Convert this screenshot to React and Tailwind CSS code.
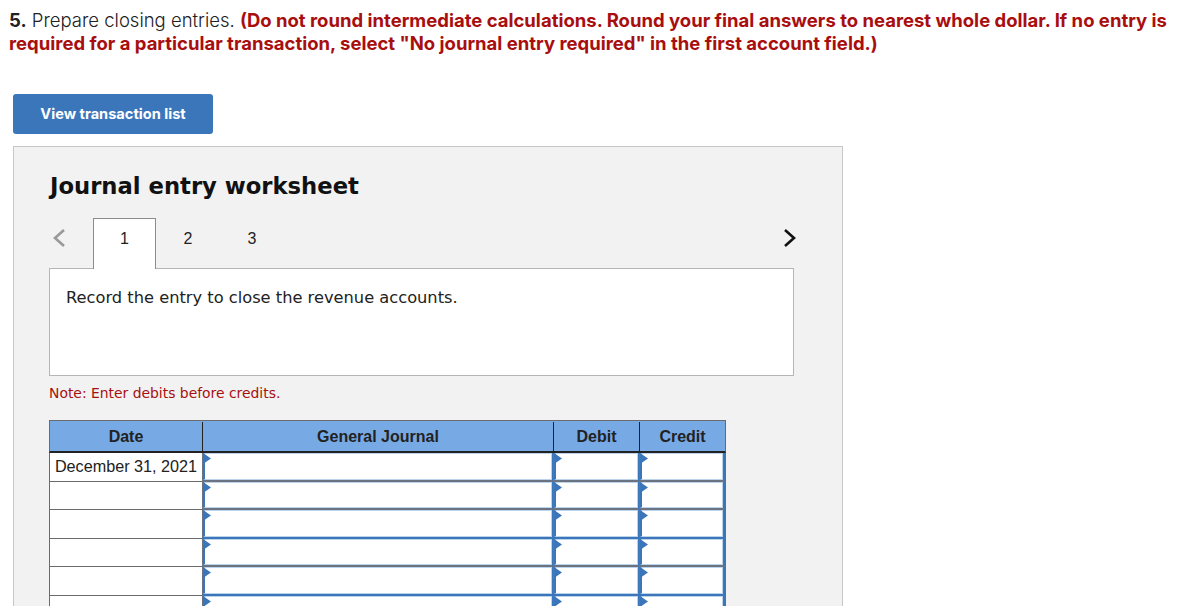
const rows = [
  { date: "December 31, 2021", line: "border-b-[#6b7280]" },
  { date: "", line: "border-b-[#6b7280]" },
  { date: "", line: "border-b-[#3b76bb]" },
  { date: "", line: "border-b-[#6b7280]" },
  { date: "", line: "border-b-[#3b76bb]" },
  { date: "", line: "border-b-[#3b76bb]" },
];

// editable cell with the little blue flag in the corner
function EntryCell({ width, line }) {
  return (
    <div className={`relative h-full shrink-0 border-b-2 border-l border-r border-l-[#6b7280] border-r-[#3b76bb] bg-white last:border-r-[3px] ${line} ${width}`}>
      <div className="h-full border border-l-2 border-[#bcd3ec] border-l-[#3b76bb]" />
      <svg className="absolute left-0 top-0" width="9" height="11" viewBox="0 0 9 11">
        <path d="M0 0L8 5.5L0 11Z" fill="#3b76bb" />
      </svg>
    </div>
  );
}

export default function App() {
  return (
    <div className="h-[606px] overflow-hidden bg-white">
      <div className="pl-[9px] pt-[9px] font-['Inter',sans-serif] text-[18.5px] leading-[23px] text-[#222]">
        <p className="whitespace-nowrap">
          <b>5.</b> <span className="font-light">Prepare closing entries.</span>{" "}
          <b className="text-[#a80e0e]">
            (Do not round intermediate calculations. Round your final answers to nearest whole dollar. If no entry is
          </b>
        </p>
        <p className="whitespace-nowrap font-bold text-[#a80e0e]">
          required for a particular transaction, select "No journal entry required" in the first account field.)
        </p>
      </div>

      <button className="ml-[13px] mt-[39px] block h-[40px] w-[200px] rounded-[3px] bg-[#3b76bb] pt-[1px] font-['Inter',sans-serif] text-[14.6px] font-bold text-white">
        View transaction list
      </button>

      <div className="ml-[13px] mt-[12px] h-[500px] w-[830px] border border-[#c6c6c6] bg-[#f2f2f2] pl-[35px] pr-[48px] pt-[24px]">
        <h2 className="pl-[1px] font-['DejaVu_Sans',sans-serif] text-[22.7px] font-bold leading-[30px] text-[#111]">
          Journal entry worksheet
        </h2>

        <div className="relative mt-[17px] flex h-[51px] items-center font-['Liberation_Sans',sans-serif] text-[16px] text-[#222]">
          <svg className="ml-[3px] mb-[12px] w-[14px]" height="20" viewBox="0 0 14 20" fill="none" stroke="#999" strokeWidth="2.6">
            <path d="M12 2L3 10L12 18" />
          </svg>
          <div className="relative z-10 ml-[27px] flex h-[51px] w-[63px] items-center justify-center border border-b-0 border-[#8c8c8c] bg-white pb-[10px]">
            1
          </div>
          <div className="flex w-[64px] justify-center pb-[10px]">2</div>
          <div className="flex w-[64px] justify-center pb-[10px]">3</div>
          <svg className="ml-auto mb-[12px] mr-[-2px] w-[14px]" height="20" viewBox="0 0 14 20" fill="none" stroke="#111" strokeWidth="2.6">
            <path d="M3 2L12 10L3 18" />
          </svg>
        </div>

        <div className="mt-[-1px] h-[108px] w-[745px] border border-[#b5b5b5] bg-white px-[16px] pt-[18px] font-['DejaVu_Sans',sans-serif] text-[16.25px] leading-[22px] text-[#222]">
          Record the entry to close the revenue accounts.
        </div>

        <p className="mt-[8px] font-['DejaVu_Sans',sans-serif] text-[13.9px] leading-[18px] text-[#a80e0e]">
          Note: Enter debits before credits.
        </p>

        <div className="mt-[18px] w-[677px] font-['Liberation_Sans',sans-serif] text-[16px] text-[#222]">
          <div className="flex h-[33px] items-center border border-[#6b6b6b] border-b-2 border-b-[#222] bg-[#77aae4] pt-[1px] font-bold">
            <div className="flex h-full w-[153px] items-center justify-center border-r border-[#222]">Date</div>
            <div className="flex h-full w-[351px] items-center justify-center border-r border-[#222]">General Journal</div>
            <div className="flex h-full w-[86px] items-center justify-center border-r border-[#222]">Debit</div>
            <div className="flex h-full flex-1 items-center justify-center">Credit</div>
          </div>
          {rows.map((row, i) => (
            <div key={i} className="flex h-[28.6px] border-l border-[#6b6b6b] bg-white">
              <div className="flex h-full w-[152px] shrink-0 items-center justify-center border-b border-[#6b6b6b] pb-[1px] text-[16.2px]">
                {row.date}
              </div>
              <EntryCell width="w-[351px]" line={row.line} />
              <EntryCell width="w-[86px]" line={row.line} />
              <EntryCell width="w-[87px]" line={row.line} />
            </div>
          ))}
        </div>
      </div>
    </div>
  );
}
